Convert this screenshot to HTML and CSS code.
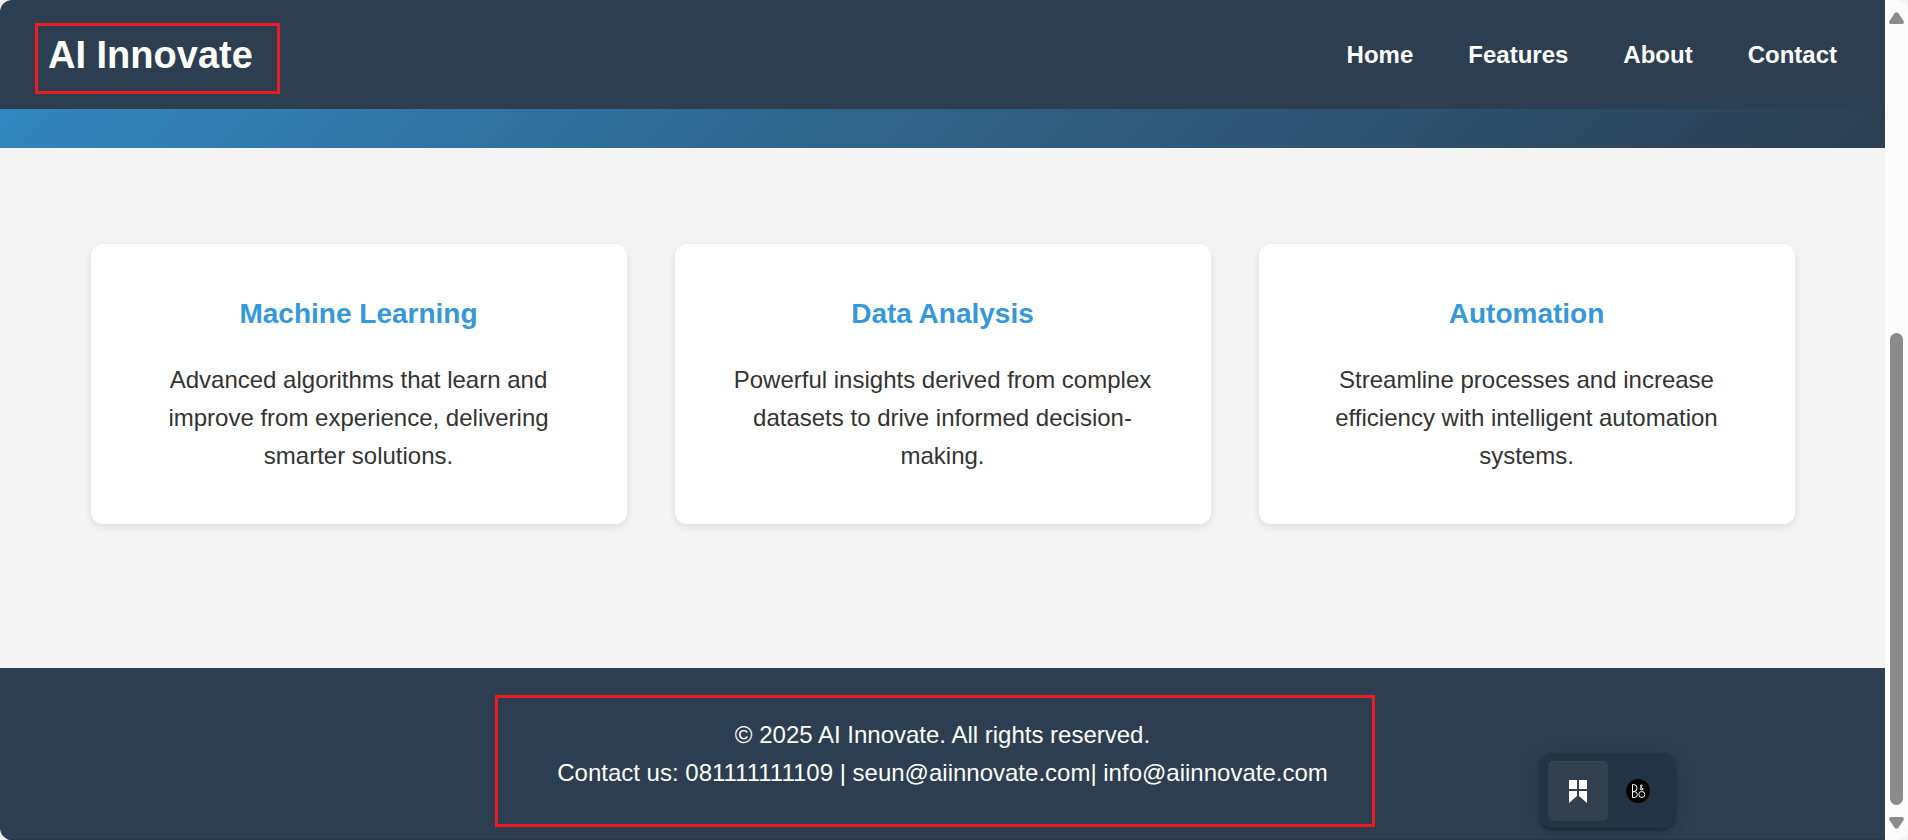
FILE: index.html
```html
<!DOCTYPE html>
<html lang="en">
<head>
<meta charset="utf-8">
<title>AI Innovate</title>
<link rel="stylesheet" href="styles.css">
</head>
<body>
<div class="window">
  <div class="page">
    <header class="header">
      <a class="logo" href="#home">AI Innovate</a>
      <nav class="nav">
        <a href="#home">Home</a>
        <a href="#features">Features</a>
        <a href="#about">About</a>
        <a href="#contact">Contact</a>
      </nav>
    </header>
    <div class="hero"></div>
    <main class="features" id="features">
      <article class="card">
        <h3>Machine Learning</h3>
        <p>Advanced algorithms that learn and improve from experience, delivering smarter solutions.</p>
      </article>
      <article class="card">
        <h3>Data Analysis</h3>
        <p>Powerful insights derived from complex datasets to drive informed decision-making.</p>
      </article>
      <article class="card">
        <h3>Automation</h3>
        <p>Streamline processes and increase efficiency with intelligent automation systems.</p>
      </article>
    </main>
    <footer class="footer" id="contact">
      <div class="footer-note">
        <p>© 2025 AI Innovate. All rights reserved.</p>
        <p>Contact us: 081111111109 | seun@aiinnovate.com| info@aiinnovate.com</p>
      </div>
    </footer>
  </div>
  <div class="scrollbar" aria-hidden="true">
    <svg width="15" height="12" viewBox="0 0 15 12"><path d="M5.600 1.200Q7.500-.8 9.400 1.200L14.600 9Q15.500 12 13 12H2Q-.5 12 .4 9Z" fill="#8b8b8b"/></svg>
    <div class="thumb"></div>
    <svg width="15" height="12" viewBox="0 0 15 12"><path d="M5.600 10.800Q7.500 12.800 9.400 10.800L14.600 3Q15.500 0 13 0H2Q-.5 0 .4 3Z" fill="#8b8b8b"/></svg>
  </div>
  <div class="dock">
    <button class="dock-button active" type="button" aria-label="Bookmarks">
      <svg width="18" height="23" viewBox="0 0 18 23" fill="#fff"><path d="M0 0h8v9H0zM10 0h8v9h-8zM0 11h8v5L0 23zM10 11h8v12l-8-7z"/></svg>
    </button>
    <button class="dock-button" type="button" aria-label="Audio">
      <svg width="24" height="24" viewBox="0 0 24 24" fill="none" stroke="#fff" stroke-width="1"><circle cx="12" cy="12" r="12" fill="#000" stroke="none"/><path d="M6.500 5.500V18.500H8.500A2.900 2.900 0 0 0 8.500 12.700H6.500M6.500 5.500H7.500A3.600 3.600 0 0 1 7.500 12.700"/><circle cx="15.800" cy="15.500" r="3"/><path d="M17.300 11.500L14.600 7.500Q14.200 5.800 15.300 5.800T16 7.500L14.200 9.300Q14 11.200 15.500 11L17.300 9"/></svg>
    </button>
  </div>
</div>
</body>
</html>
```
FILE: styles.css
```css
* {
  box-sizing: border-box;
  margin: 0;
  padding: 0;
}

body {
  background: #f3f3f3;
  color: #333;
  font: 24px/1.6 "Liberation Sans", Arial, sans-serif;
}

a {
  color: inherit;
  text-decoration: none;
}

.window {
  position: relative;
  display: flex;
  height: 100vh;
  border-radius: 12px;
  overflow: hidden;
  background: #fcfcfc;
}

.page {
  flex: 1;
  display: flex;
  flex-direction: column;
  background: #f4f4f4;
}

.header {
  display: flex;
  justify-content: space-between;
  align-items: center;
  padding: 25px 48px 23px;
  background: #2c3e50;
  color: #fff;
  font-weight: bold;
}

.logo {
  position: relative;
  font-size: 38px;
}

.logo::after,
.footer-note::after {
  content: "";
  position: absolute;
  border: 3px solid #ed1c24;
}

.logo::after {
  inset: -2px -27px -8px -13px;
}

.nav {
  display: flex;
  gap: 55px;
}

.hero {
  height: 39px;
  background: linear-gradient(135deg, #3498db, #2c3e50) bottom / 100% 540px;
}

.features {
  display: grid;
  grid-template-columns: repeat(3, 1fr);
  gap: 48px;
  width: 100%;
  max-width: 1800px;
  margin: 0 auto 48px;
  padding: 96px 48px;
}

.card {
  padding: 48px;
  border-radius: 12px;
  background: #fff;
  box-shadow: 0 3px 8px rgba(0, 0, 0, 0.1);
  text-align: center;
}

.card h3 {
  margin-bottom: 24px;
  color: #3498db;
  font-size: 28px;
}

.footer {
  flex: 1;
  display: flex;
  justify-content: center;
  align-items: flex-start;
  padding-top: 48px;
  border-bottom: 1px solid #273747;
  background: #2c3e50;
  color: #fff;
  text-align: center;
}

.footer-note {
  position: relative;
}

.footer-note::after {
  inset: -21px -47px -34px -62px;
}

.scrollbar {
  display: flex;
  flex-direction: column;
  align-items: center;
  width: 23px;
  padding: 12px 0 11px;
}

.thumb {
  width: 13px;
  height: 472px;
  margin: auto 0 12px;
  border-radius: 8px;
  background: #8b8b8b;
}

.dock {
  position: absolute;
  right: 233px;
  bottom: 12px;
  display: flex;
  padding: 8px 7px 7px 8px;
  border-radius: 12px;
  background: #243444;
  box-shadow: 0 2px 3px rgba(0, 0, 0, 0.3), 0 4px 20px rgba(0, 0, 0, 0.15);
}

.dock-button {
  display: grid;
  place-items: center;
  width: 60px;
  height: 60px;
  border: 0;
  border-radius: 6px;
  background: transparent;
}

.dock-button.active {
  background: #323f4d;
  box-shadow: inset 0 1px #3b4855;
}
```
